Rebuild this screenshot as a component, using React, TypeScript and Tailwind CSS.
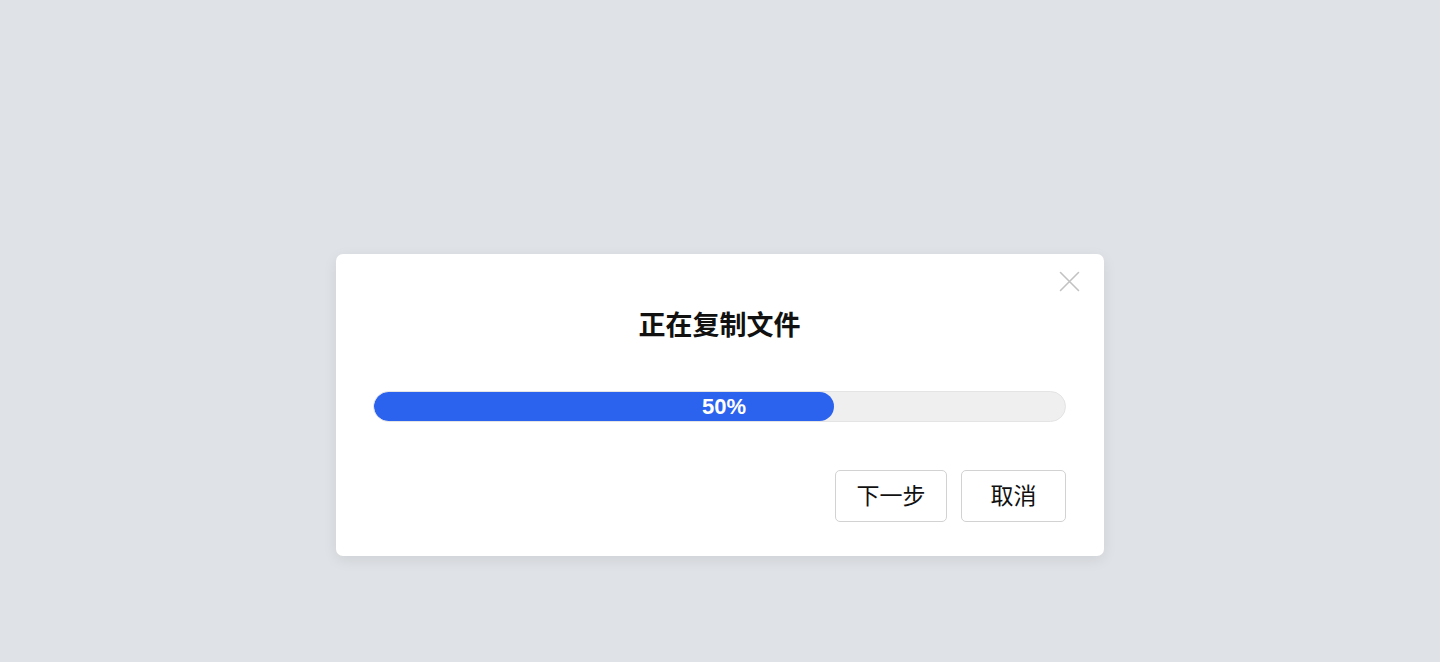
export default function App() {
  const progress = 50;

  return (
    <div
      className="min-h-screen w-full bg-[#dfe2e6] flex justify-center items-start pt-[254px]"
      style={{ fontFamily: '"Liberation Sans", "Noto Sans CJK SC", sans-serif' }}
    >
      <div className="relative w-[768px] bg-white rounded-[7px] shadow-[0_4px_14px_rgba(0,0,0,0.08)] pl-[37px] pr-[38px] pt-[54px] pb-[34px]">
        {/* close */}
        <button className="absolute top-[17px] right-[24px] text-[#c2c2c2]">
          <svg width="21" height="21" viewBox="0 0 21 21" fill="none" stroke="currentColor" strokeWidth="1.6" strokeLinecap="round">
            <path d="M1.5 1.5 L19.5 19.5 M19.5 1.5 L1.5 19.5" />
          </svg>
        </button>

        <h2 className="text-center text-[27px] leading-[36px] font-semibold text-[#111]">正在复制文件</h2>

        {/* progress bar */}
        <div className="relative mt-[47px] h-[31px] rounded-full bg-[#efefef] border border-[#e4e4e4] overflow-hidden">
          <div className="h-full rounded-full bg-[#2b63ee]" style={{ width: '66.5%' }} />
          <span className="absolute inset-0 flex items-center justify-center pl-[9px] text-white text-[22px] font-bold">
            {progress}%
          </span>
        </div>

        <div className="flex justify-end gap-[14px] mt-[48px]">
          <button className="w-[112px] h-[52px] rounded-[5px] border border-[#d2d2d2] bg-white text-[23px] text-[#111]">
            下一步
          </button>
          <button className="w-[105px] h-[52px] rounded-[5px] border border-[#d2d2d2] bg-white text-[23px] text-[#111]">
            取消
          </button>
        </div>
      </div>
    </div>
  );
}
